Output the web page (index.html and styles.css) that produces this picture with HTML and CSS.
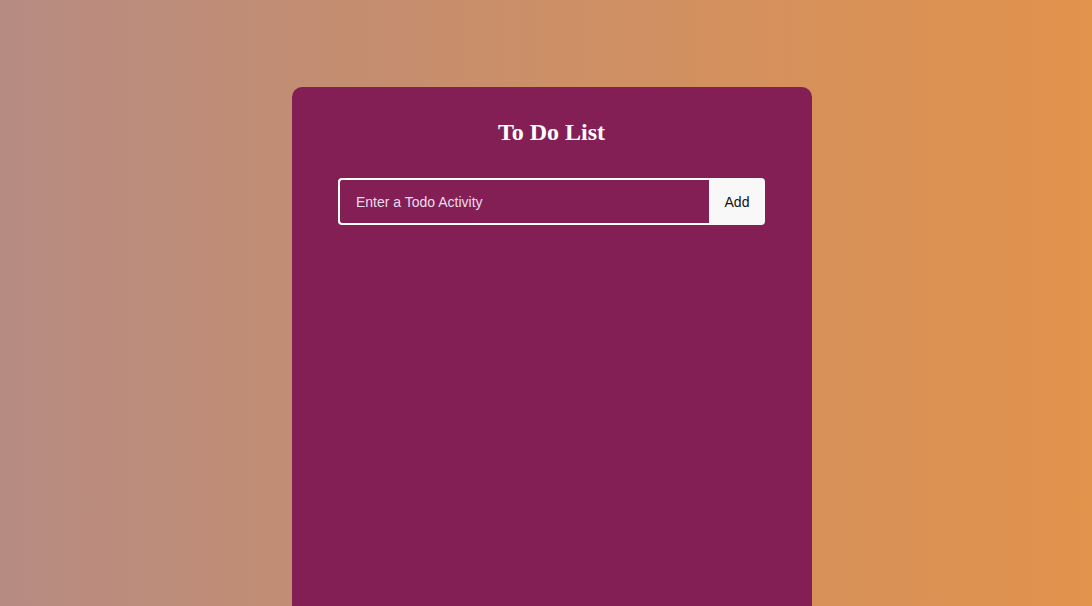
FILE: index.html
```html
<!DOCTYPE html>
<html>
<head>
<meta charset="utf-8">
<link rel="stylesheet" href="styles.css">
</head>
<body>
<div class="page">
  <div class="card">
    <h1 class="title">To Do List</h1>
    <div class="form">
      <input class="field" type="text" placeholder="Enter a Todo Activity">
      <button class="add">Add</button>
    </div>
  </div>
</div>
</body>
</html>
```

FILE: styles.css
```css
html, body {
  margin: 0;
  height: 100%;
}
body {
  background: linear-gradient(to right, #b68b82, #e2934c);
  overflow: hidden;
}
.page {
  display: flex;
  justify-content: center;
  padding: 87px 0 0 12px;
  box-sizing: border-box;
  height: 100%;
}
.card {
  width: 520px;
  height: 100%;
  box-sizing: border-box;
  background: #841f55;
  border-radius: 10px 10px 0 0;
  padding: 0 47px 0 46px;
}
.title {
  margin: 0;
  padding-top: 30px;
  text-align: center;
  color: #ffffff;
  font-family: "Liberation Serif", serif;
  font-weight: bold;
  font-size: 24px;
  line-height: 30px;
}
.form {
  display: flex;
  margin-top: 31px;
  height: 47px;
}
.field {
  flex: 1;
  box-sizing: border-box;
  height: 47px;
  border: 2px solid #ffffff;
  border-right: none;
  border-radius: 4px 0 0 4px;
  background: transparent;
  color: #ffffff;
  padding: 0 16px;
  font-family: "Liberation Sans", Arial, sans-serif;
  font-size: 14px;
  outline: none;
}
.field::placeholder {
  color: #eadcee;
  opacity: 1;
}
.add {
  width: 56px;
  height: 47px;
  border: none;
  border-radius: 0 4px 4px 0;
  background: #f8f8f8;
  color: #111;
  font-family: "Liberation Sans", Arial, sans-serif;
  font-size: 14px;
  padding: 0;
}
```
